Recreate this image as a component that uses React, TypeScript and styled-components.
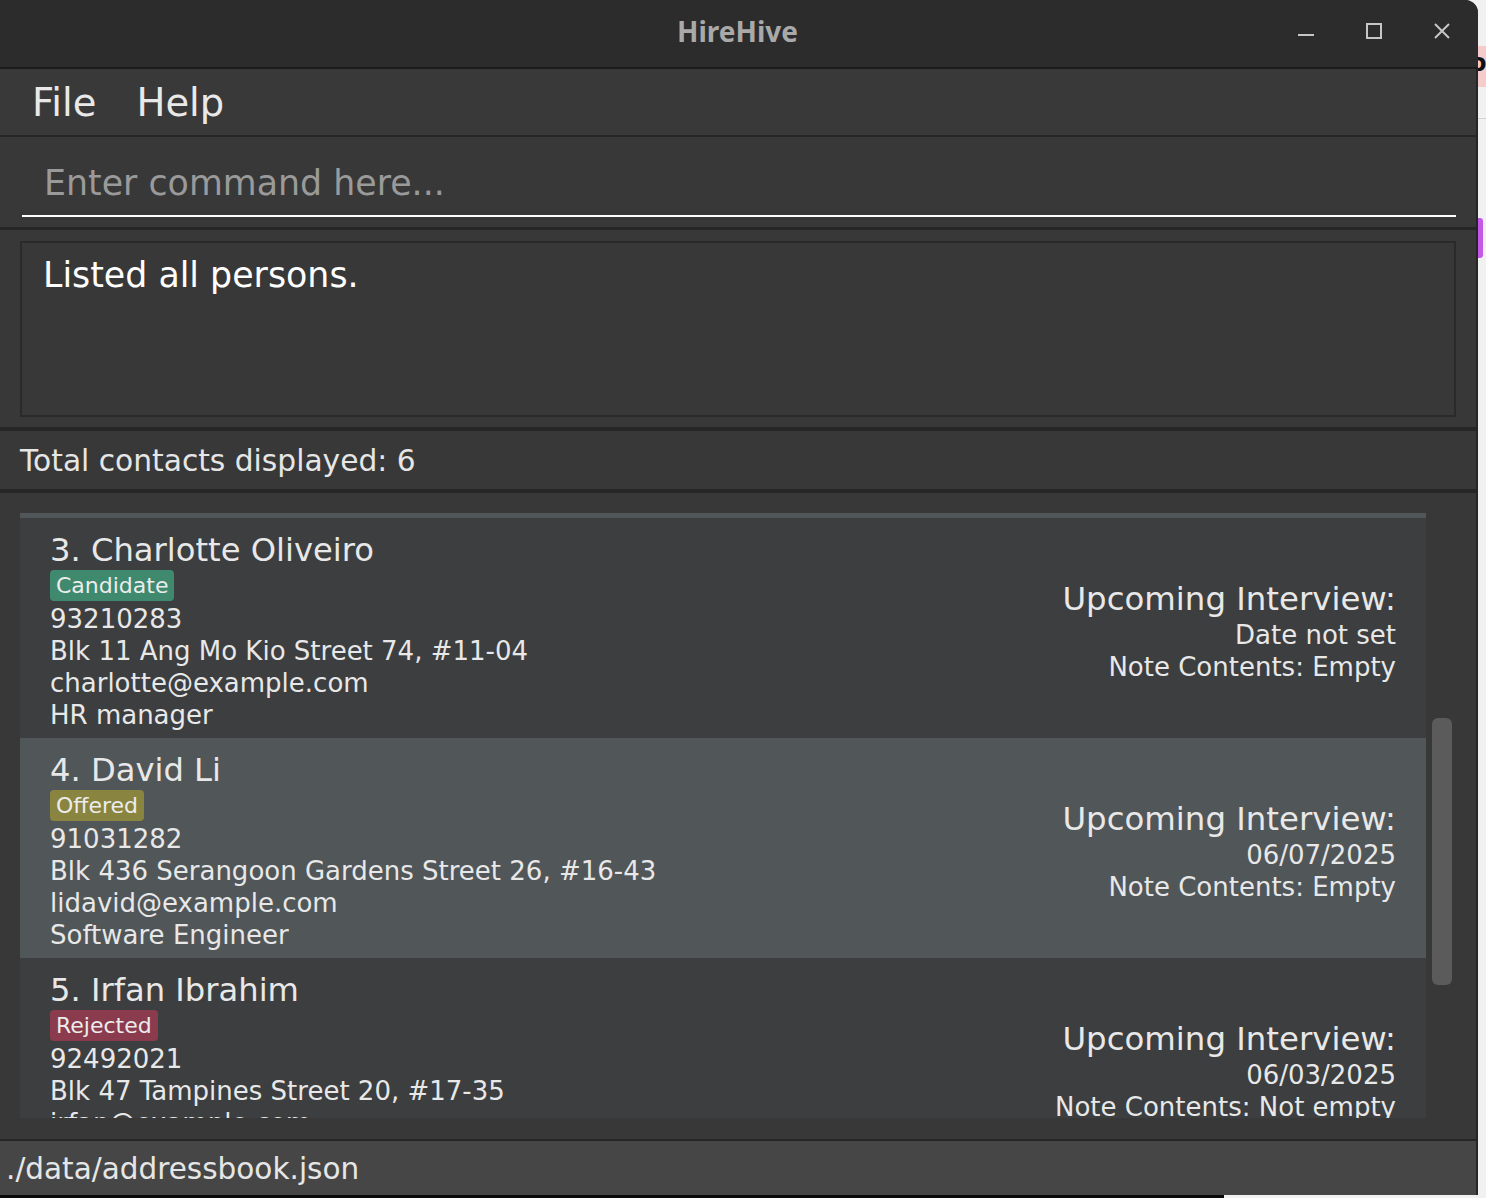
import React, { useLayoutEffect, useRef } from "react";
import styled, { createGlobalStyle } from "styled-components";

const GlobalStyle = createGlobalStyle`
  html, body {
    margin: 0;
    padding: 0;
    background: #f1f1f1;
  }
  body {
    font-family: "DejaVu Sans", "Liberation Sans", sans-serif;
  }
  * {
    box-sizing: border-box;
  }
`;

const Desktop = styled.div`
  width: 1486px;
  height: 1198px;
  display: flex;
  flex-direction: column;
  overflow: hidden;
  background: #f1f1f1;
`;

const DesktopRow = styled.div`
  display: flex;
  height: 1195px;
`;

const Window = styled.div`
  width: 1478px;
  height: 100%;
  display: flex;
  flex-direction: column;
  background: #262626;
  border-top-right-radius: 13px;
  overflow: hidden;
`;

const TitleBar = styled.header`
  flex: none;
  height: 69px;
  display: grid;
  grid-template-columns: 1fr auto 1fr;
  align-items: center;
  padding-bottom: 5px;
  background: #2c2c2c;
  border-bottom: 2px solid #1c1c1c;
`;

const Title = styled.h1`
  grid-column: 2;
  margin: 0 0 0 -3px;
  font-family: "Noto Sans", "DejaVu Sans", sans-serif;
  font-weight: 700;
  font-size: 28px;
  color: #a9a9a9;
`;

const Controls = styled.div`
  grid-column: 3;
  justify-self: end;
  display: flex;
  gap: 32px;
  margin-right: 18px;
`;

const ControlButton = styled.div`
  width: 36px;
  height: 36px;
  display: flex;
  align-items: center;
  justify-content: center;
  color: #c6c6c6;
`;

const Body = styled.div`
  flex: 1;
  display: flex;
  flex-direction: column;
  padding-right: 2px;
`;

const Section = styled.section<{ $height: number; $sep: number }>`
  flex: none;
  height: ${(p) => p.$height}px;
  margin-bottom: ${(p) => p.$sep}px;
  background: #383838;
`;

const MenuBar = styled(Section)`
  display: flex;
  align-items: center;
  padding: 1px 0 0 12px;
  background: #393939;
`;

const MenuItem = styled.span`
  padding: 0 20px;
  font-size: 38.5px;
  line-height: 46px;
  color: #e9e9e9;
`;

const CommandSection = styled(Section)`
  padding: 13px 20px 10px 22px;
`;

const CommandInput = styled.input`
  display: block;
  width: 100%;
  height: 67px;
  padding: 12px 22px;
  border: none;
  border-bottom: 2px solid #ffffff;
  background: transparent;
  font-family: "DejaVu Sans", sans-serif;
  font-size: 34.8px;
  line-height: 41px;
  color: #ffffff;
  outline: none;

  &::placeholder {
    color: #9a9a9a;
  }
`;

const ResultSection = styled(Section)`
  padding: 11px 20px 10px 20px;
`;

const ResultBox = styled.div`
  height: 100%;
  border: 2px solid #2a2a2a;
  padding: 12px 21px;
  font-size: 34.8px;
  line-height: 41px;
  color: #ffffff;
`;

const CountSection = styled(Section)`
  padding: 2px 0 0 20px;
  font-size: 29.7px;
  line-height: 56px;
  color: #e6e6e6;
`;

const ListSection = styled(Section)`
  display: flex;
  padding: 20px 20px 21px 20px;
`;

const Viewport = styled.div`
  width: 1406px;
  height: 605px;
  overflow: hidden;
`;

const Track = styled.div`
  width: 30px;
  padding-left: 6px;
`;

const Thumb = styled.div<{ $top: number; $height: number }>`
  width: 20px;
  margin-top: ${(p) => p.$top}px;
  height: ${(p) => p.$height}px;
  border-radius: 6px;
  background: #5b5b5b;
`;

const Card = styled.div<{ $alt: boolean }>`
  height: 220px;
  display: flex;
  justify-content: space-between;
  align-items: center;
  padding: 12px 30px 7px 30px;
  background: ${(p) => (p.$alt ? "#515658" : "#3c3e3f")};
  color: #e8e8e8;
`;

const LeftColumn = styled.div`
  display: flex;
  flex-direction: column;
  align-items: flex-start;
`;

const Name = styled.div`
  font-size: 32.2px;
  line-height: 40px;
  white-space: nowrap;
`;

const tagColours: Record<string, string> = {
  Candidate: "#3f8a6f",
  Offered: "#898540",
  Rejected: "#8a3b4e",
};

const Tag = styled.span<{ $colour: string }>`
  height: 31px;
  margin-bottom: 2px;
  padding: 0 6px;
  border-radius: 4px;
  background: ${(p) => p.$colour};
  font-size: 22px;
  line-height: 31px;
  color: #ececec;
`;

const Detail = styled.div`
  font-size: 26px;
  line-height: 32px;
  white-space: nowrap;
`;

const RightColumn = styled.div`
  display: flex;
  flex-direction: column;
  align-items: flex-end;
  text-align: right;
`;

const Heading = styled.div`
  font-size: 32.4px;
  line-height: 40px;
`;

const Footer = styled(Section)`
  padding: 2px 0 0 6px;
  background: #464646;
  font-size: 29.5px;
  line-height: 52px;
  color: #e6e6e6;
`;

const DesktopEdge = styled.div`
  flex: 1;
  display: flex;
  flex-direction: column;
  overflow: hidden;
`;

const EdgeGap = styled.div<{ $h: number }>`
  height: ${(p) => p.$h}px;
`;

const PinkChip = styled.div`
  height: 41px;
  background: #f6cbcb;
  font: 700 24px "DejaVu Sans", sans-serif;
  line-height: 34px;
  color: #111;
  margin-left: -8px;
`;

const EdgeRule = styled.div`
  height: 1px;
  background: #d2d2d2;
`;

const PurpleBar = styled.div`
  width: 5px;
  height: 40px;
  background: #c757e8;
  border-radius: 0 3px 3px 0;
`;

const Taskbar = styled.div`
  height: 3px;
  display: flex;
`;

const TaskbarDark = styled.div`
  width: 1224px;
  background: #0a0a0a;
`;

const TaskbarLight = styled.div`
  flex: 1;
  background: #f1f1f1;
`;

type Person = {
  name: string;
  tag: string;
  phone: string;
  address: string;
  email: string;
  role: string;
  date: string;
  note: string;
};

const persons: Person[] = [
  {
    name: "Alex Yeoh",
    tag: "Candidate",
    phone: "87438807",
    address: "Blk 30 Geylang Street 29, #06-40",
    email: "alexyeoh@example.com",
    role: "Data Analyst",
    date: "Date not set",
    note: "Empty",
  },
  {
    name: "Bernice Yu",
    tag: "Offered",
    phone: "99272758",
    address: "Blk 30 Lorong 3 Serangoon Gardens, #07-18",
    email: "berniceyu@example.com",
    role: "Product Manager",
    date: "Date not set",
    note: "Empty",
  },
  {
    name: "Charlotte Oliveiro",
    tag: "Candidate",
    phone: "93210283",
    address: "Blk 11 Ang Mo Kio Street 74, #11-04",
    email: "charlotte@example.com",
    role: "HR manager",
    date: "Date not set",
    note: "Empty",
  },
  {
    name: "David Li",
    tag: "Offered",
    phone: "91031282",
    address: "Blk 436 Serangoon Gardens Street 26, #16-43",
    email: "lidavid@example.com",
    role: "Software Engineer",
    date: "06/07/2025",
    note: "Empty",
  },
  {
    name: "Irfan Ibrahim",
    tag: "Rejected",
    phone: "92492021",
    address: "Blk 47 Tampines Street 20, #17-35",
    email: "irfan@example.com",
    role: "Designer",
    date: "06/03/2025",
    note: "Not empty",
  },
  {
    name: "Roy Balakrishnan",
    tag: "Candidate",
    phone: "92624417",
    address: "Blk 45 Aljunied Street 85, #11-31",
    email: "royb@example.com",
    role: "Intern",
    date: "Date not set",
    note: "Empty",
  },
];

const SCROLL_TOP = 435;

const MinimiseIcon = () => (
  <svg width="16" height="16" viewBox="0 0 16 16">
    <line x1="0" y1="12" x2="16" y2="12" stroke="currentColor" strokeWidth="2" />
  </svg>
);

const MaximiseIcon = () => (
  <svg width="16" height="16" viewBox="0 0 16 16">
    <rect x="1" y="1" width="14" height="14" fill="none" stroke="currentColor" strokeWidth="2" />
  </svg>
);

const CloseIcon = () => (
  <svg width="16" height="16" viewBox="0 0 16 16">
    <path d="M1 1 L15 15 M15 1 L1 15" stroke="currentColor" strokeWidth="2" />
  </svg>
);

const PersonCard = ({ person, index }: { person: Person; index: number }) => (
  <Card $alt={index % 2 === 1}>
    <LeftColumn>
      <Name>{`${index + 1}. ${person.name}`}</Name>
      <Tag $colour={tagColours[person.tag]}>{person.tag}</Tag>
      <Detail>{person.phone}</Detail>
      <Detail>{person.address}</Detail>
      <Detail>{person.email}</Detail>
      <Detail>{person.role}</Detail>
    </LeftColumn>
    <RightColumn>
      <Heading>Upcoming Interview:</Heading>
      <Detail>{person.date}</Detail>
      <Detail>{`Note Contents: ${person.note}`}</Detail>
    </RightColumn>
  </Card>
);

const App = () => {
  const viewportRef = useRef<HTMLDivElement>(null);

  useLayoutEffect(() => {
    if (viewportRef.current) viewportRef.current.scrollTop = SCROLL_TOP;
  }, []);

  return (
    <>
      <GlobalStyle />
      <Desktop>
        <DesktopRow>
          <Window>
            <TitleBar>
              <Title>HireHive</Title>
              <Controls>
                <ControlButton>
                  <MinimiseIcon />
                </ControlButton>
                <ControlButton>
                  <MaximiseIcon />
                </ControlButton>
                <ControlButton>
                  <CloseIcon />
                </ControlButton>
              </Controls>
            </TitleBar>
            <Body>
              <MenuBar $height={66} $sep={2}>
                <MenuItem>File</MenuItem>
                <MenuItem>Help</MenuItem>
              </MenuBar>
              <CommandSection $height={90} $sep={3}>
                <CommandInput placeholder="Enter command here..." readOnly />
              </CommandSection>
              <ResultSection $height={197} $sep={4}>
                <ResultBox>Listed all persons.</ResultBox>
              </ResultSection>
              <CountSection $height={58} $sep={4}>
                {`Total contacts displayed: ${persons.length}`}
              </CountSection>
              <ListSection $height={646} $sep={2}>
                <Viewport ref={viewportRef}>
                  {persons.map((p, i) => (
                    <PersonCard key={p.name} person={p} index={i} />
                  ))}
                </Viewport>
                <Track>
                  <Thumb $top={205} $height={267} />
                </Track>
              </ListSection>
              <Footer $height={54} $sep={0}>
                ./data/addressbook.json
              </Footer>
            </Body>
          </Window>
          <DesktopEdge>
            <EdgeGap $h={46} />
            <PinkChip>o</PinkChip>
            <EdgeGap $h={31} />
            <EdgeRule />
            <EdgeGap $h={99} />
            <PurpleBar />
          </DesktopEdge>
        </DesktopRow>
        <Taskbar>
          <TaskbarDark />
          <TaskbarLight />
        </Taskbar>
      </Desktop>
    </>
  );
};

export default App;
